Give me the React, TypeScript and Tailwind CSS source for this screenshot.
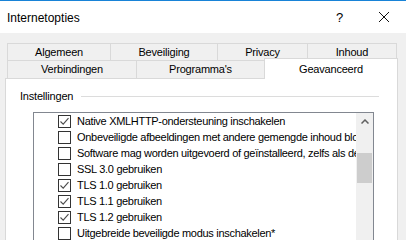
import { ReactNode } from 'react'

const font = { fontFamily: '"Liberation Sans", Arial, sans-serif' }

type Item = { label: string; checked: boolean }

const items: Item[] = [
    { label: 'Native XMLHTTP-ondersteuning inschakelen', checked: true },
    { label: 'Onbeveiligde afbeeldingen met andere gemengde inhoud blokkeren', checked: false },
    { label: 'Software mag worden uitgevoerd of geïnstalleerd, zelfs als de handtekening ongeldig is', checked: false },
    { label: 'SSL 3.0 gebruiken', checked: false },
    { label: 'TLS 1.0 gebruiken', checked: true },
    { label: 'TLS 1.1 gebruiken', checked: true },
    { label: 'TLS 1.2 gebruiken', checked: true },
    { label: 'Uitgebreide beveiligde modus inschakelen*', checked: false },
]

function Tab({ children, className }: { children: ReactNode; className: string }) {
    return (
        <div className={`flex items-center justify-center border border-[#d9d9d9] bg-[#f0f0f0] text-[11px] tracking-[-0.2px] text-black ${className}`}>
            {children}
        </div>
    )
}

function Checkbox({ checked }: { checked: boolean }) {
    return (
        <div className="flex h-[13px] w-[13px] shrink-0 items-center justify-center border border-[#333] bg-white">
            {checked ? (
                <svg viewBox="0 0 11 11" className="h-[11px] w-[11px]" fill="none">
                    <path d="M1.5 5.5L4.2 8.2L9.5 2.2" stroke="#4d4d4d" strokeWidth="1.1" />
                </svg>
            ) : null}
        </div>
    )
}

export default function App() {
    return (
        <div className="flex h-[240px] w-[406px] flex-col overflow-hidden bg-[#f0f0f0]" style={font}>
            <div className="flex h-[33px] shrink-0 items-center border-t border-[#1883d7] bg-white pl-[7px] text-[12px] text-black">
                <span className="flex-1 pt-[1px]">Internetopties</span>
                <span className="w-[10px] pt-[1px] text-[13px]">?</span>
                <div className="ml-[32px] mr-[16px] flex h-[12px] w-[12px] items-center justify-center">
                    <svg viewBox="0 0 12 12" className="h-[12px] w-[12px]" fill="none">
                        <path d="M1 1L11 11M11 1L1 11" stroke="#111" strokeWidth="1" />
                    </svg>
                </div>
            </div>

            <div className="mt-[10px] flex flex-col pl-[7px]">
                <div className="flex h-[18px]">
                    <Tab className="w-[104px]">Algemeen</Tab>
                    <Tab className="-ml-px w-[108px]">Beveiliging</Tab>
                    <Tab className="-ml-px w-[91px]">Privacy</Tab>
                    <Tab className="-ml-px w-[90px]">Inhoud</Tab>
                </div>
                <div className="flex h-[17px]">
                    <Tab className="-mt-px h-[18px] w-[130px] border-b-0">Verbindingen</Tab>
                    <Tab className="-ml-px -mt-px h-[18px] w-[129px] border-b-0">Programma's</Tab>
                    <div className="relative z-10 -ml-px -mt-[3px] flex h-[21px] w-[134px] items-start justify-center border border-b-0 border-[#d9d9d9] bg-white pt-[2px] text-[11px] tracking-[-0.2px] text-black">
                        Geavanceerd
                    </div>
                </div>
            </div>

            <div className="ml-[5px] flex w-[393px] flex-1 flex-col border-x border-t border-[#d9d9d9] bg-white">
                <div className="mt-[9px] flex items-center pl-[14px] pr-[18px] text-[11px] tracking-[-0.2px] text-black">
                    <span>Instellingen</span>
                    <div className="ml-[8px] h-px flex-1 bg-[#dcdcdc]" />
                </div>
                <div className="ml-[27px] mt-[7px] flex w-[341px] flex-1 border-x border-t border-[#828790]">
                    <div className="flex min-w-0 flex-1 flex-col overflow-hidden pt-px">
                        {items.map((item) => (
                            <div key={item.label} className="flex h-[16px] items-center pl-[24px] text-[11px] tracking-[-0.3px] text-black">
                                <Checkbox checked={item.checked} />
                                <span className="ml-[6px] whitespace-nowrap">{item.label}</span>
                            </div>
                        ))}
                    </div>
                    <div className="flex w-[17px] shrink-0 flex-col bg-[#f0f0f0]">
                        <div className="flex h-[17px] items-center justify-center pt-px">
                            <svg viewBox="0 0 8 5" className="h-[5px] w-[8px]" fill="none">
                                <path d="M0.5 4.5L4 1L7.5 4.5" stroke="#606060" strokeWidth="1.5" />
                            </svg>
                        </div>
                        <div className="mx-[1px] mt-[23px] h-[30px] bg-[#cdcdcd]" />
                    </div>
                </div>
            </div>
        </div>
    )
}
